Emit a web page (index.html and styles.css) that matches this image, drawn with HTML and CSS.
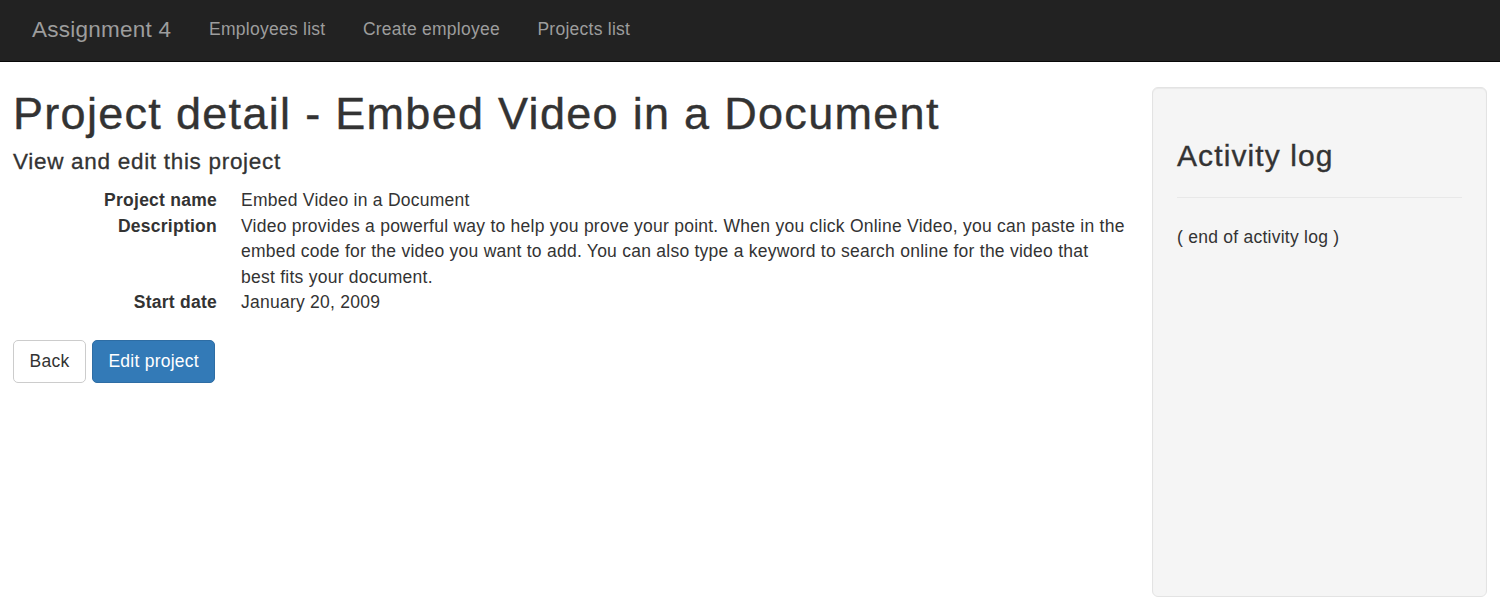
FILE: index.html
```html
<!DOCTYPE html>
<html lang="en">
<head>
<meta charset="utf-8">
<title>Project detail</title>
<link rel="stylesheet" href="styles.css">
</head>
<body>
<nav class="navbar">
  <a class="brand" href="#">Assignment 4</a>
  <ul class="nav">
    <li><a href="#">Employees list</a></li>
    <li><a href="#">Create employee</a></li>
    <li><a href="#">Projects list</a></li>
  </ul>
</nav>
<div class="page">
  <main class="main">
    <h1 class="title">Project detail - Embed Video in a Document</h1>
    <h4 class="subtitle">View and edit this project</h4>
    <dl class="details">
      <dt>Project name</dt>
      <dd>Embed Video in a Document</dd>
      <dt>Description</dt>
      <dd>Video provides a powerful way to help you prove your point. When you click Online Video, you can paste in the embed code for the video you want to add. You can also type a keyword to search online for the video that best fits your document.</dd>
      <dt>Start date</dt>
      <dd>January 20, 2009</dd>
    </dl>
    <div class="actions">
      <a class="btn btn-default" href="#">Back</a>
      <a class="btn btn-primary" href="#">Edit project</a>
    </div>
  </main>
  <aside class="well">
    <h3 class="well-title">Activity log</h3>
    <hr class="well-rule">
    <p class="well-text">( end of activity log )</p>
  </aside>
</div>
</body>
</html>
```
FILE: styles.css
```css
* { box-sizing: border-box; }

html, body {
  margin: 0;
  padding: 0;
}

body {
  font-family: "Liberation Sans", Arial, Helvetica, sans-serif;
  font-size: 17.5px;
  line-height: 25px;
  letter-spacing: 0.25px;
  color: #333;
  background: #fff;
}

a { text-decoration: none; }

.navbar {
  display: flex;
  align-items: flex-start;
  height: 62px;
  background: #222;
  border-bottom: 1px solid #080808;
  padding: 0 13px;
}

.brand {
  display: block;
  font-size: 22.5px;
  line-height: 25px;
  padding: 16.5px 19px 0 19px;
  color: #9d9d9d;
}

.nav {
  display: flex;
  list-style: none;
  margin: 0;
  padding: 0;
}

.nav a {
  display: block;
  padding: 17px 18.75px 0;
  line-height: 25px;
  color: #9d9d9d;
}

.page {
  display: flex;
  align-items: flex-start;
  gap: 25px;
  padding: 0 13px;
}

.main {
  flex: 1;
  min-width: 0;
}

.title {
  font-size: 45px;
  font-weight: 500;
  line-height: 1.1;
  letter-spacing: 1.3px;
  -webkit-text-stroke: 0.4px #333;
  margin: 27px 0 11px;
}

.subtitle {
  font-size: 22.5px;
  font-weight: 500;
  line-height: 1.1;
  letter-spacing: 0.7px;
  -webkit-text-stroke: 0.3px #333;
  margin: 0 0 14px;
}

.details {
  margin: 0 0 24px;
  line-height: 25.5px;
}

.details dt {
  float: left;
  clear: left;
  width: 204px;
  text-align: right;
  font-weight: bold;
}

.details dd {
  margin-left: 228px;
}

.actions {
  display: flex;
  gap: 6px;
}

.btn {
  display: inline-block;
  padding: 8px 15.5px;
  font-size: 17.5px;
  line-height: 25px;
  border: 1px solid transparent;
  border-radius: 5px;
}

.btn-default {
  color: #333;
  background: #fff;
  border-color: #ccc;
}

.btn-primary {
  color: #fff;
  background: #337ab7;
  border-color: #2e6da4;
}

.well {
  flex: 0 0 335px;
  height: 510px;
  margin-top: 25px;
  padding: 24px;
  background: #f5f5f5;
  border: 1px solid #e3e3e3;
  border-radius: 6px;
  box-shadow: inset 0 1px 1px rgba(0, 0, 0, 0.05);
}

.well-title {
  font-size: 30px;
  font-weight: 500;
  line-height: 1.1;
  letter-spacing: 1.1px;
  -webkit-text-stroke: 0.35px #333;
  margin: 27px 0 0;
}

.well-rule {
  border: 0;
  border-top: 1px solid #e8e8e8;
  margin: 25px 0 27px;
}

.well-text {
  margin: 0;
}
```
